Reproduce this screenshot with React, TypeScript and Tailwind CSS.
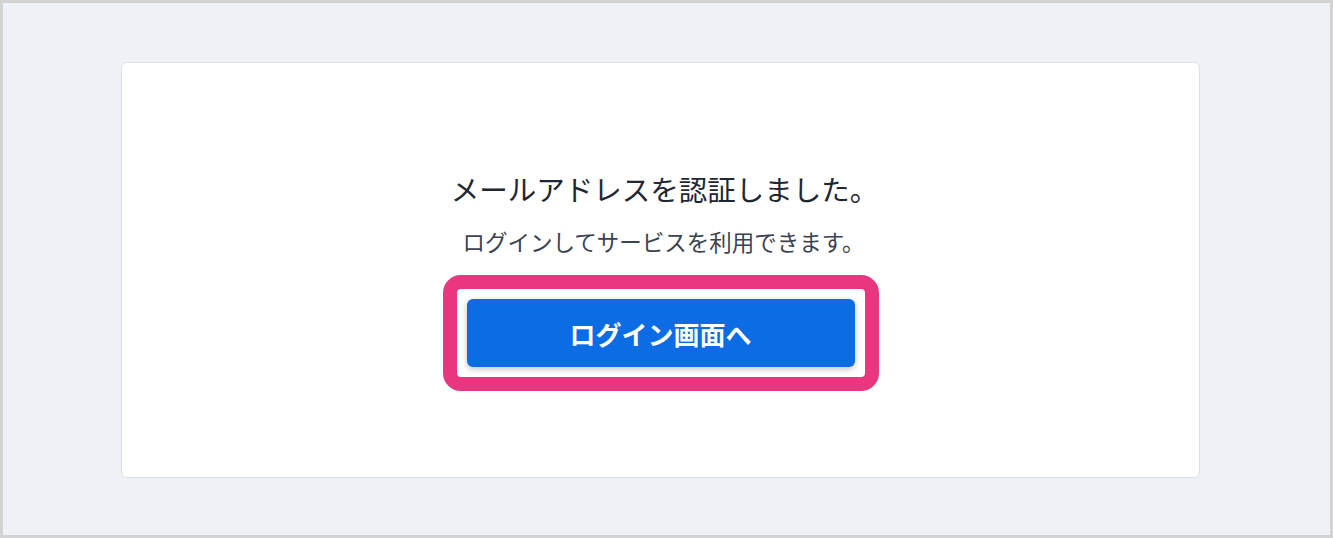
export default function App() {
  return (
    <div
      className="w-[1333px] h-[538px] border-[3px] border-[#d3d3d3] bg-[#eef2f7] pt-[59px]"
      style={{ fontFamily: '"Noto Sans CJK JP", "Noto Sans", sans-serif' }}
    >
      <div className="ml-[118px] w-[1079px] h-[416px] bg-white border border-[#dcdfe4] rounded-md flex flex-col items-center pt-[106px]">
        <h1 className="pl-[8px] text-[28.5px] leading-[40px] font-normal text-[#1f2733]">
          メールアドレスを認証しました。
        </h1>
        <p className="mt-[17px] pl-[6px] text-[22.5px] leading-[30px] text-[#3b4250]">
          ログインしてサービスを利用できます。
        </p>
        <div className="mt-[19px] border-[14px] border-[#e9367f] rounded-[18px] p-[10px]">
          <button className="w-[388px] h-[68px] rounded-md bg-[#0b6ce3] text-white text-[26px] font-bold shadow-[0_2px_6px_rgba(0,0,0,0.25)]">
            ログイン画面へ
          </button>
        </div>
      </div>
    </div>
  )
}
